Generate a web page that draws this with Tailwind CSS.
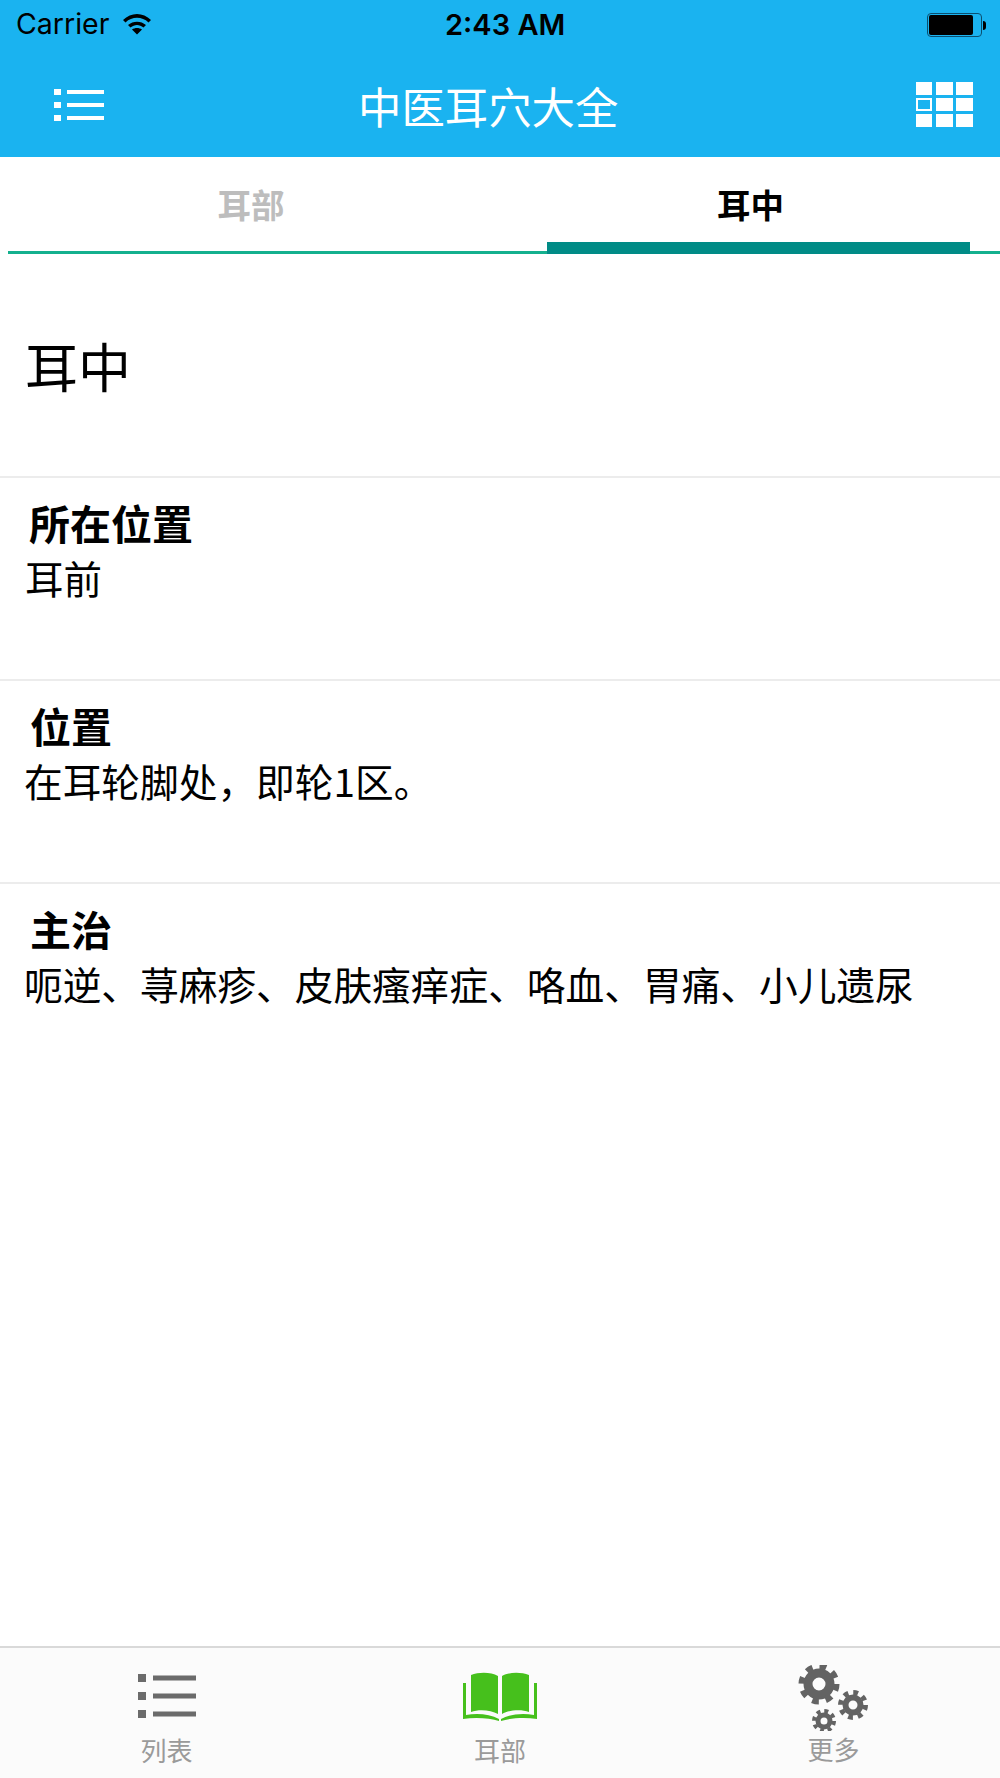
<!DOCTYPE html>
<html lang="zh-CN"><head><meta charset="utf-8">
<script src="https://cdn.jsdelivr.net/npm/@tailwindcss/browser@4"></script>
</head>
<body class="bg-white">
<div class="w-[1000px] h-[1778px] flex flex-col bg-white text-black overflow-hidden font-['Noto_Sans_CJK_SC','Noto_Sans',sans-serif]">
  <header class="h-[157px] shrink-0 bg-[#1ab3f0] flex flex-col">
    <div class="h-[47px] flex items-center justify-between pl-4 pr-[14px] relative font-['Inter','Noto_Sans',sans-serif]">
      <div class="flex items-center gap-[13px]">
        <span class="text-[28.500px] leading-[47px]">Carrier</span>
        <svg width="30" height="23" viewBox="0 0 30 22"><path d="M1 7.500C9 -0.500 21 -0.500 29 7.500L26.500 10C20 3.800 10 3.800 3.500 10Z M6 12.500C11 8 19 8 24 12.500L21.500 15C17.500 11.500 12.500 11.500 8.500 15Z M10 17C13 15 17 15 20 17L15 22Z" fill="#000"/></svg>
      </div>
      <span class="absolute left-[445px] top-0 text-[29px] leading-[49px] font-semibold">2:43 AM</span>
      <div class="flex items-center gap-[1px] mt-[3px]">
        <div class="w-[55px] h-[24px] rounded-[4px] border border-[#0b4f70] p-[1px] pr-[8px]"><div class="w-full h-full bg-black rounded-[2px]"></div></div>
        <div class="w-[3px] h-[9px] bg-black rounded-r-full"></div>
      </div>
    </div>
    <div class="flex-1 flex items-start justify-between relative pl-[54px] pr-[27px]">
      <svg class="mt-[41px]" width="50" height="34" viewBox="0 0 50 34" fill="#fff">
        <rect x="0" y="1" width="7" height="6"/><rect x="0" y="14" width="7" height="6"/><rect x="0" y="27" width="7" height="6"/>
        <rect x="13" y="2" width="37" height="4"/><rect x="13" y="15" width="37" height="4"/><rect x="13" y="28" width="37" height="4"/>
      </svg>
      <h1 class="absolute left-[358px] top-[30px] text-[43.400px] leading-[56px] text-white font-normal">中医耳穴大全</h1>
      <svg class="mt-[35px]" width="57" height="45" viewBox="0 0 57 45" fill="#fff">
        <rect x="0" y="0" width="16" height="13"/><rect x="20" y="0" width="17" height="13"/><rect x="40" y="0" width="17" height="13"/>
        <rect x="1" y="17" width="14" height="11" fill="none" stroke="#fff" stroke-width="2"/><rect x="20" y="16" width="17" height="13"/><rect x="40" y="16" width="17" height="13"/>
        <rect x="0" y="32" width="16" height="13"/><rect x="20" y="32" width="17" height="13"/><rect x="40" y="32" width="17" height="13"/>
      </svg>
    </div>
  </header>

  <nav class="h-[97px] shrink-0 ml-2 flex border-b-[3px] border-[#14b08e] relative">
    <div class="w-[486px] shrink-0 flex justify-center pt-[25px] text-[33.500px] leading-[44px] font-bold text-[#bdbdbd]">耳部</div>
    <div class="w-[513px] shrink-0 flex justify-center pt-[25px] text-[33.500px] leading-[44px] font-bold text-black">耳中</div>
    <div class="absolute left-[539px] bottom-[-3px] w-[423px] h-[12px] bg-[#008b86]"></div>
  </nav>

  <main class="flex-1 flex flex-col">
    <section class="h-[224px] shrink-0 border-b-2 border-[#ececec] pl-[25px] pt-[75px] text-[53px] leading-[72px]">耳中</section>
    <section class="h-[203px] shrink-0 border-b-2 border-[#ececec] pt-[16px]">
      <h2 class="pl-[29px] text-[41px] leading-[56px] font-semibold">所在位置</h2>
      <p class="pl-[25px] text-[38.500px] leading-[54px]">耳前</p>
    </section>
    <section class="h-[203px] shrink-0 border-b-2 border-[#ececec] pt-[16px]">
      <h2 class="pl-[30px] text-[41px] leading-[56px] font-semibold">位置</h2>
      <p class="pl-[24px] text-[38.700px] leading-[54px]">在耳轮脚处，即轮1区。</p>
    </section>
    <section class="pt-[16px]">
      <h2 class="pl-[30px] text-[41px] leading-[56px] font-semibold">主治</h2>
      <p class="pl-[24px] text-[38.700px] leading-[54px]">呃逆、荨麻疹、皮肤瘙痒症、咯血、胃痛、小儿遗尿</p>
    </section>
  </main>

  <footer class="h-[132px] shrink-0 bg-[#fbfbfb] border-t-2 border-[#d9d9d9] relative flex">
    <div class="w-[333px] flex flex-col items-center">
      <svg class="mt-[25px]" width="58" height="46" viewBox="0 0 58 46" fill="#6b6b6b">
        <rect x="0" y="1" width="8" height="8"/><rect x="0" y="19" width="8" height="8"/><rect x="0" y="37" width="8" height="8"/>
        <rect x="15" y="2.500" width="43" height="5"/><rect x="15" y="20.500" width="43" height="5"/><rect x="15" y="38.500" width="43" height="5"/>
      </svg>
      <span class="mt-[14px] text-[26px] leading-[34px] text-[#9a9a9a]">列表</span>
    </div>
    <div class="w-[334px] flex flex-col items-center">
      <svg class="mt-[24px]" width="74" height="50" viewBox="0 0 74 50" fill="#46c01c">
        <path d="M8 3C16 0 28 0 35 4V42C28 38 16 37 8 40Z"/>
        <path d="M66 3C58 0 46 0 39 4V42C46 38 58 37 66 40Z"/>
        <path d="M0 11H3V43C14 41 27 42 36 47V49C27 46 12 45 0 47Z"/>
        <path d="M74 11H71V43C60 41 47 42 38 47V49C47 46 62 45 74 47Z"/>
      </svg>
      <span class="mt-[11px] text-[26px] leading-[34px] text-[#9a9a9a]">耳部</span>
    </div>
    <div class="flex-1 flex flex-col items-center">
      <svg class="mt-[17px]" width="72" height="66" viewBox="0 0 72 66" fill="none" stroke="#636363">
        <circle cx="21" cy="19" r="11" stroke-width="9"/>
        <circle cx="21" cy="19" r="17" stroke-width="7" stroke-dasharray="6.500 6.850"/>
        <circle cx="55" cy="40" r="7.500" stroke-width="6"/>
        <circle cx="55" cy="40" r="12.500" stroke-width="5" stroke-dasharray="4.800 5"/>
        <circle cx="26" cy="56" r="6" stroke-width="5"/>
        <circle cx="26" cy="56" r="10" stroke-width="4" stroke-dasharray="4 3.850"/>
      </svg>
      <span class="mt-[1px] text-[26px] leading-[34px] text-[#9a9a9a]">更多</span>
    </div>
  </footer>
</div>
</body></html>
